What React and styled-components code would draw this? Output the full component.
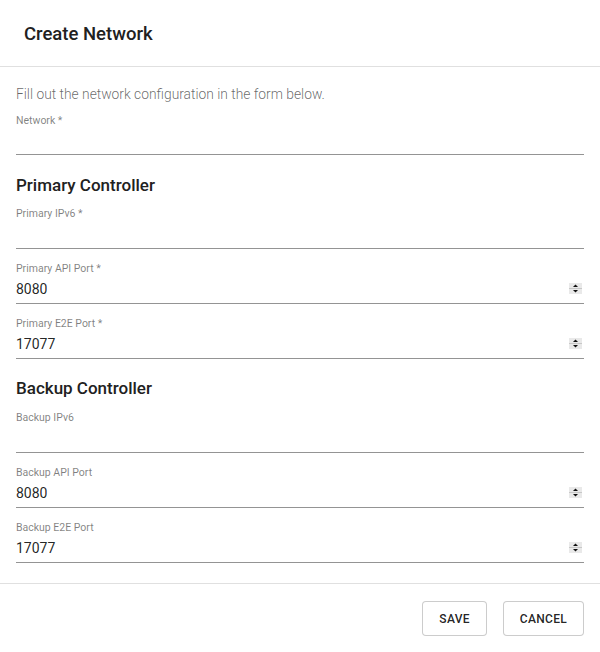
import React from 'react'
import styled, { createGlobalStyle } from 'styled-components'

const GlobalStyle = createGlobalStyle`
  html, body {
    margin: 0;
    padding: 0;
    background: #fff;
    font-family: Roboto, "Liberation Sans", Arial, sans-serif;
  }
  * { box-sizing: border-box; }
`

const Dialog = styled.div`
  width: 600px;
  display: flex;
  flex-direction: column;
  background: #fff;
`

const Header = styled.div`
  height: 67px;
  padding: 0 24px;
  display: flex;
  align-items: center;
  border-bottom: 1px solid #e0e0e0;
  h2 {
    margin: 2px 0 0 0;
    font-size: 18.5px;
    font-weight: 500;
    color: #212121;
  }
`

const Content = styled.div`
  padding: 20px 16px 20px;
  display: flex;
  flex-direction: column;
`

const Description = styled.p`
  margin: 0;
  font-size: 13.8px;
  line-height: 14px;
  font-weight: 300;
  color: rgba(0, 0, 0, 0.6);
`

const SectionTitle = styled.h3`
  margin: ${p => (p.$top ? '21px 0 0' : '20px 0 1px')};
  font-size: 17px;
  line-height: 18px;
  font-weight: 500;
  color: #212121;
`

const FieldWrap = styled.div`
  margin-top: 14px;
  display: flex;
  flex-direction: column;
`

const Label = styled.label`
  font-size: 10.5px;
  line-height: 12px;
  height: 12px;
  color: rgba(0, 0, 0, 0.5);
`

const InputRow = styled.div`
  height: ${p => (p.$first ? 28 : 29)}px;
  display: flex;
  align-items: center;
  border-bottom: 1px solid rgba(0, 0, 0, 0.42);
  padding-bottom: 1px;
`

const Input = styled.input`
  flex: 1;
  min-width: 0;
  border: none;
  outline: none;
  padding: 0;
  background: transparent;
  font-family: inherit;
  font-size: 14px;
  color: rgba(0, 0, 0, 0.87);
`

const SpinBox = styled.span`
  display: flex;
  flex-shrink: 0;
  width: 13px;
  height: 11px;
  margin-right: 2px;
`

const Footer = styled.div`
  border-top: 1px solid #e0e0e0;
  padding: 17px 16px 17px;
  display: flex;
  justify-content: flex-end;
  gap: 16px;
`

const Button = styled.button`
  height: 35px;
  padding: 0 16px;
  border: 1px solid rgba(0, 0, 0, 0.2);
  border-radius: 4px;
  background: #fff;
  font-family: inherit;
  font-size: 12px;
  font-weight: 500;
  color: rgba(0, 0, 0, 0.87);
  letter-spacing: 0.3px;
  cursor: pointer;
`

function Spinner() {
  return (
    <SpinBox>
      <svg width="13" height="11" viewBox="0 0 13 11">
        <rect x="0" y="0" width="13" height="11" fill="#e9e9e9" />
        <rect x="0" y="5" width="13" height="1" fill="#c8c8c8" />
        <path d="M4 4 L6.5 1.5 L9 4 Z" fill="#111" />
        <path d="M4 7 L6.5 9.5 L9 7 Z" fill="#111" />
      </svg>
    </SpinBox>
  )
}

function Field({ label, value, number, first }) {
  return (
    <FieldWrap>
      <Label>{label}</Label>
      <InputRow $first={first}>
        <Input type="text" defaultValue={value} />
        {number && <Spinner />}
      </InputRow>
    </FieldWrap>
  )
}

export default function App() {
  return (
    <>
      <GlobalStyle />
      <Dialog>
        <Header>
          <h2>Create Network</h2>
        </Header>
        <Content>
          <Description>Fill out the network configuration in the form below.</Description>
          <Field label="Network *" first />
          <SectionTitle $top>Primary Controller</SectionTitle>
          <Field label="Primary IPv6 *" />
          <Field label="Primary API Port *" value="8080" number />
          <Field label="Primary E2E Port *" value="17077" number />
          <SectionTitle>Backup Controller</SectionTitle>
          <Field label="Backup IPv6" />
          <Field label="Backup API Port" value="8080" number />
          <Field label="Backup E2E Port" value="17077" number />
        </Content>
        <Footer>
          <Button>SAVE</Button>
          <Button>CANCEL</Button>
        </Footer>
      </Dialog>
    </>
  )
}
